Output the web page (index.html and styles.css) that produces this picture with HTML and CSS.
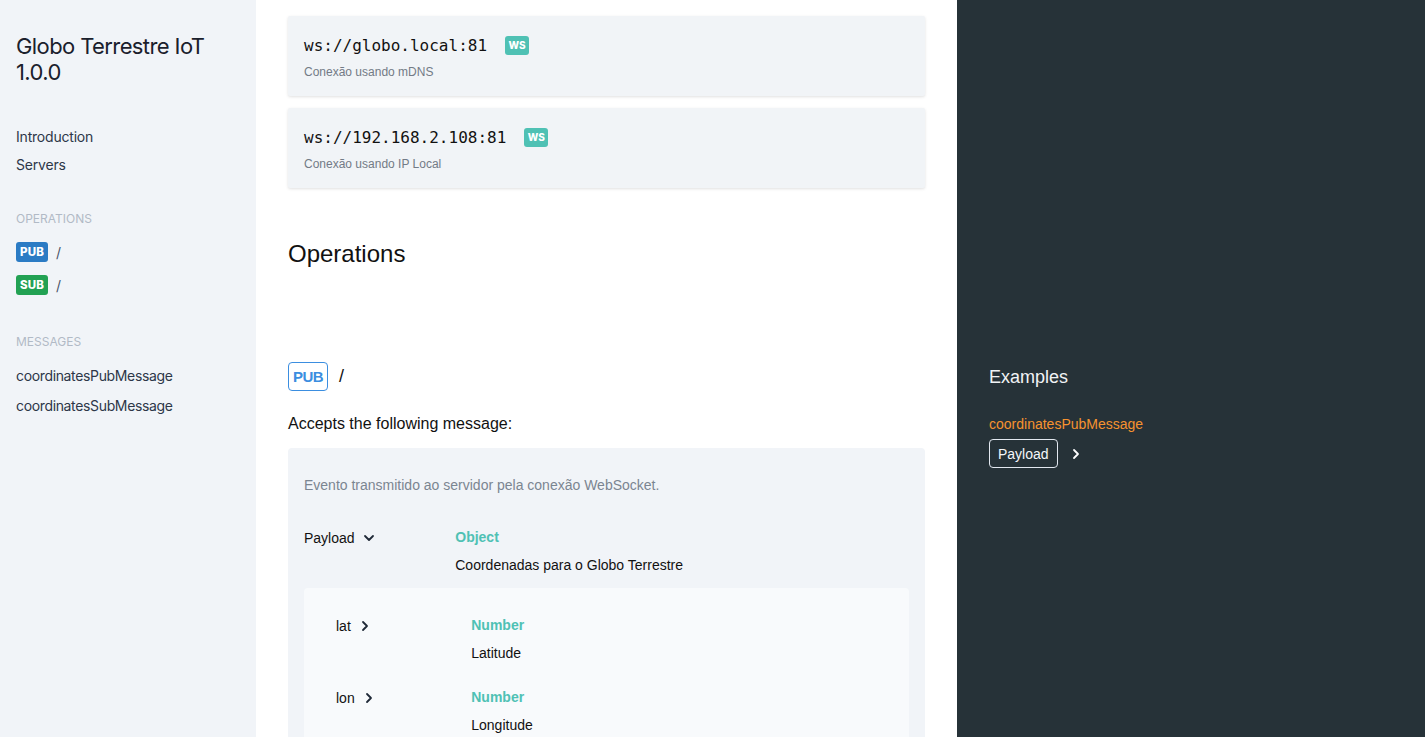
FILE: index.html
```html
<!DOCTYPE html>
<html lang="en">
<head>
<meta charset="utf-8">
<title>Globo Terrestre IoT 1.0.0</title>
<link rel="stylesheet" href="styles.css">
</head>
<body>
<div class="layout">
  <aside class="sidebar">
    <h1 class="title">Globo Terrestre IoT 1.0.0</h1>
    <ul class="nav">
      <li>Introduction</li>
      <li>Servers</li>
    </ul>
    <div class="nav-label label-ops">OPERATIONS</div>
    <ul class="ops">
      <li><span class="op-badge pub">PUB</span><span class="op-path">/</span></li>
      <li><span class="op-badge sub">SUB</span><span class="op-path">/</span></li>
    </ul>
    <div class="nav-label label-msgs">MESSAGES</div>
    <ul class="msgs">
      <li>coordinatesPubMessage</li>
      <li>coordinatesSubMessage</li>
    </ul>
  </aside>
  <div class="content">
    <section class="row row-servers">
      <div class="main-col">
        <div class="server-card">
          <div class="server-url"><span class="url">ws://globo.local:81</span><span class="proto">WS</span></div>
          <div class="server-desc">Conexão usando mDNS</div>
        </div>
        <div class="server-card">
          <div class="server-url"><span class="url">ws://192.168.2.108:81</span><span class="proto">WS</span></div>
          <div class="server-desc">Conexão usando IP Local</div>
        </div>
        <h2 class="section-title">Operations</h2>
      </div>
      <div class="side-col"></div>
    </section>
    <section class="row row-op">
      <div class="main-col">
        <div class="op-head"><span class="op-tag">PUB</span><span class="op-channel">/</span></div>
        <p class="accepts">Accepts the following message:</p>
        <div class="message">
          <p class="msg-desc">Evento transmitido ao servidor pela conexão WebSocket.</p>
          <div class="field">
            <div class="field-name">Payload
              <svg class="chev" width="12" height="12" viewBox="0 0 12 12"><path d="M2 4l4 4 4-4" fill="none" stroke="#1f2937" stroke-width="1.8" stroke-linecap="round" stroke-linejoin="round"/></svg>
            </div>
            <div class="field-info">
              <div class="field-type">Object</div>
              <div class="field-text">Coordenadas para o Globo Terrestre</div>
            </div>
          </div>
          <div class="props">
            <div class="field prop">
              <div class="field-name">lat
                <svg class="chev" width="12" height="12" viewBox="0 0 12 12"><path d="M4 2l4 4-4 4" fill="none" stroke="#1f2937" stroke-width="1.8" stroke-linecap="round" stroke-linejoin="round"/></svg>
              </div>
              <div class="field-info">
                <div class="field-type">Number</div>
                <div class="field-text">Latitude</div>
              </div>
            </div>
            <div class="field prop">
              <div class="field-name">lon
                <svg class="chev" width="12" height="12" viewBox="0 0 12 12"><path d="M4 2l4 4-4 4" fill="none" stroke="#1f2937" stroke-width="1.8" stroke-linecap="round" stroke-linejoin="round"/></svg>
              </div>
              <div class="field-info">
                <div class="field-type">Number</div>
                <div class="field-text">Longitude</div>
              </div>
            </div>
          </div>
        </div>
      </div>
      <div class="side-col">
        <h3 class="examples-title">Examples</h3>
        <div class="example-name">coordinatesPubMessage</div>
        <div class="example-row">
          <span class="example-btn">Payload</span>
          <svg class="example-chev" width="10" height="14" viewBox="0 0 10 14"><path d="M3 3l4 4-4 4" fill="none" stroke="#ffffff" stroke-width="1.8" stroke-linecap="round" stroke-linejoin="round"/></svg>
        </div>
      </div>
    </section>
  </div>
</div>
</body>
</html>
```
FILE: styles.css
```css
html, body {
  margin: 0;
  padding: 0;
}
body {
  font-family: "Liberation Sans", Arial, sans-serif;
  color: #1a202c;
  background: #ffffff;
  overflow: hidden;
}
ul {
  list-style: none;
  margin: 0;
  padding: 0;
}
p, h1, h2, h3 {
  margin: 0;
}
.layout {
  display: flex;
  min-height: 100vh;
}

/* Sidebar */
.sidebar {
  width: 256px;
  flex: 0 0 256px;
  box-sizing: border-box;
  background: #f1f4f8;
  padding: 33px 16px 16px;
  font-family: Inter, "Noto Sans", sans-serif;
  color: #2d3748;
}
.title {
  font-size: 22px;
  font-weight: 400;
  line-height: 26px;
  color: #1a202c;
  letter-spacing: -0.6px;
}
.nav {
  margin-top: 38px;
}
.nav li {
  font-size: 14px;
  line-height: 28px;
  letter-spacing: -0.2px;
}
.nav-label {
  font-size: 12px;
  line-height: 20px;
  color: #b1bac6;
}
.label-ops {
  margin-top: 30px;
}
.ops {
  margin-top: 13px;
  display: flex;
  flex-direction: column;
  gap: 13px;
}
.ops li {
  display: flex;
  align-items: center;
  height: 20px;
}
.op-badge {
  display: inline-flex;
  align-items: center;
  justify-content: center;
  width: 32px;
  height: 20px;
  border-radius: 3px;
  color: #fff;
  font-size: 11.5px;
  font-weight: 800;
  letter-spacing: 0.2px;
}
.op-badge.pub { background: #2b7bc4; }
.op-badge.sub { background: #22a153; }
.op-path {
  margin-left: 8px;
  font-size: 14px;
  color: #4a5568;
}
.label-msgs {
  margin-top: 37px;
}
.msgs {
  margin-top: 14px;
}
.msgs li {
  font-size: 14px;
  line-height: 20px;
  margin-bottom: 10px;
  letter-spacing: -0.35px;
}

/* Content */
.content {
  flex: 1;
  display: flex;
  flex-direction: column;
}
.row {
  display: grid;
  grid-template-columns: 701px 1fr;
}
.row-op {
  flex: 1;
}
.main-col {
  padding: 0 32px;
}
.side-col {
  background: #263238;
  padding: 0 32px;
}

.server-card {
  background: #f1f4f7;
  box-shadow: 0 1px 3px rgba(0, 0, 0, 0.12);
  border-radius: 2px;
  padding: 16px;
  margin-top: 16px;
  height: 48px;
}
.server-card + .server-card {
  margin-top: 12px;
}
.server-url {
  display: flex;
  align-items: center;
  height: 26px;
}
.url {
  font-family: "DejaVu Sans Mono", "Liberation Mono", monospace;
  font-size: 16px;
  color: #111;
}
.proto {
  margin-left: 18px;
  background: #4fc1b4;
  color: #fff;
  font-family: Inter, "Liberation Sans", sans-serif;
  font-size: 10px;
  font-weight: 800;
  border-radius: 3px;
  width: 24px;
  height: 19px;
  display: inline-flex;
  align-items: center;
  justify-content: center;
}
.server-desc {
  margin-top: 6px;
  font-size: 12px;
  line-height: 16px;
  color: #737b86;
}
.section-title {
  margin-top: 50px;
  font-size: 24px;
  font-weight: 400;
  line-height: 32px;
  color: #111;
  padding-bottom: 76px;
}

.row-op .main-col {
  padding-top: 16px;
}
.op-head {
  display: flex;
  align-items: center;
}
.op-tag {
  box-sizing: border-box;
  height: 29px;
  padding: 0 4px;
  border: 1px solid #3b8ee0;
  border-radius: 4px;
  color: #3b8ee0;
  font-size: 15px;
  font-weight: 700;
  display: inline-flex;
  align-items: center;
  letter-spacing: -0.6px;
}
.op-channel {
  margin-left: 11px;
  font-size: 18px;
  color: #111;
}
.accepts {
  margin-top: 21px;
  font-size: 16px;
  line-height: 24px;
  color: #111;
}
.message {
  margin-top: 12px;
  background: #f1f4f8;
  border-radius: 4px;
  padding: 27px 16px 16px;
  min-height: 400px;
}
.msg-desc {
  font-size: 14px;
  line-height: 20px;
  color: #7b8591;
}
.field {
  display: flex;
  margin-top: 32px;
}
.field-name {
  width: 25%;
  flex: 0 0 25%;
  font-size: 14px;
  line-height: 20px;
  color: #111;
  display: flex;
  align-items: center;
  gap: 8px;
  align-self: flex-start;
  margin-top: 1px;
}
.field-info {
  flex: 1;
}
.field-type {
  font-size: 14px;
  line-height: 20px;
  font-weight: 700;
  color: #4fc1b4;
}
.field-text {
  margin-top: 8px;
  font-size: 14px;
  line-height: 20px;
  color: #111;
}
.props {
  margin-top: 13px;
  background: #f8fafc;
  border-radius: 4px;
  padding: 27px 32px 16px;
  min-height: 300px;
}
.field.prop {
  margin-top: 0;
}
.field.prop + .field.prop {
  margin-top: 24px;
}
.chev {
  flex: 0 0 auto;
}

/* Examples */
.row-op .side-col {
  padding-top: 17px;
}
.examples-title {
  font-size: 18px;
  line-height: 28px;
  font-weight: 400;
  color: #f1f3f5;
}
.example-name {
  margin-top: 23px;
  font-size: 14px;
  line-height: 20px;
  color: #f6922f;
}
.example-row {
  margin-top: 5px;
  display: flex;
  align-items: center;
}
.example-btn {
  box-sizing: border-box;
  height: 29px;
  padding: 0 8px;
  border: 1px solid #e2e8f0;
  border-radius: 4px;
  color: #f5f7fa;
  font-size: 14px;
  display: inline-flex;
  align-items: center;
}
.example-chev {
  margin-left: 13px;
}
```
